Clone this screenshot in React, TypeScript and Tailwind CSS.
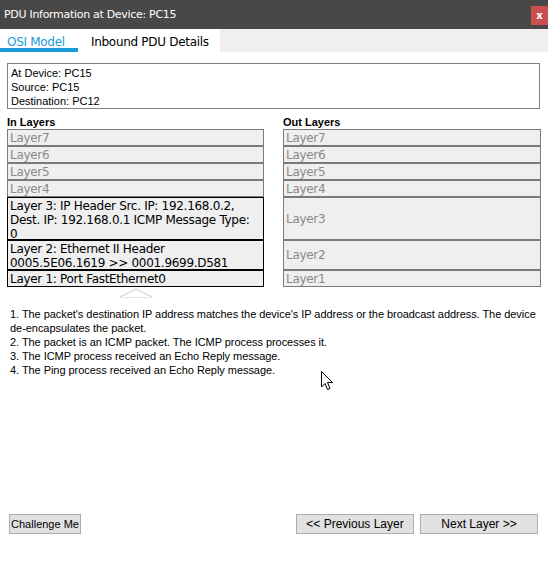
import React from "react";

type LayerRow = {
  label: React.ReactNode;
  h: string;
  active?: boolean;
};

const inLayers: LayerRow[] = [
  { label: "Layer7", h: "h-[17px]" },
  { label: "Layer6", h: "h-[17px]" },
  { label: "Layer5", h: "h-[17px]" },
  { label: "Layer4", h: "h-[17px]" },
  {
    label: (
      <>
        Layer 3: IP Header Src. IP: 192.168.0.2,
        <br />
        Dest. IP: 192.168.0.1 ICMP Message Type:
        <br />0
      </>
    ),
    h: "h-[43px]",
    active: true,
  },
  {
    label: (
      <>
        Layer 2: Ethernet II Header
        <br />
        0005.5E06.1619 &gt;&gt; 0001.9699.D581
      </>
    ),
    h: "h-[30px]",
    active: true,
  },
  { label: "Layer 1: Port FastEthernet0", h: "h-[17px]", active: true },
];

const outLayers: LayerRow[] = [
  { label: "Layer7", h: "h-[17px]" },
  { label: "Layer6", h: "h-[17px]" },
  { label: "Layer5", h: "h-[17px]" },
  { label: "Layer4", h: "h-[17px]" },
  { label: "Layer3", h: "h-[43px]" },
  { label: "Layer2", h: "h-[30px]" },
  { label: "Layer1", h: "h-[17px]" },
];

const steps = [
  "1. The packet's destination IP address matches the device's IP address or the broadcast address. The device",
  "de-encapsulates the packet.",
  "2. The packet is an ICMP packet. The ICMP process processes it.",
  "3. The ICMP process received an Echo Reply message.",
  "4. The Ping process received an Echo Reply message.",
];

function LayerBox({ row, center }: { row: LayerRow; center?: boolean }) {
  return (
    <div
      className={`${row.h} border bg-[#efefef] pl-[2px] text-[12px] leading-[14px] font-['DejaVu_Sans',sans-serif] ${
        row.active
          ? "border-black text-black"
          : "border-[#7a7a7a] text-[#8a8a8a]"
      } ${center ? "flex items-center" : "pt-[1px]"}`}
    >
      <div className="tracking-[-0.3px] whitespace-nowrap">{row.label}</div>
    </div>
  );
}

export default function App() {
  return (
    <div className="relative w-[548px] h-[562px] bg-white flex flex-col overflow-hidden font-['Liberation_Sans',Arial,sans-serif]">
      {/* Title bar */}
      <div className="h-[29px] bg-[#4a4846] flex items-start justify-between shrink-0">
        <span className="pl-[4px] pt-[7px] text-white text-[11px] font-['DejaVu_Sans',sans-serif] tracking-[-0.3px]">
          PDU Information at Device: PC15
        </span>
        <button className="mt-[6px] w-[17px] h-[19px] bg-[#c9504f] text-white text-[10px] font-bold leading-[19px] text-center font-['DejaVu_Sans',sans-serif]">
          x
        </button>
      </div>

      {/* Tabs */}
      <div className="h-[23px] bg-[#efefef] flex shrink-0 font-['DejaVu_Sans',sans-serif] text-[12px] tracking-[-0.3px]">
        <div className="w-[220px] bg-white flex">
          <div className="w-[78px] border-b-[4px] border-[#1a9bd7] text-[#1a9bd7] pl-[7px] pt-[4px]">
            OSI Model
          </div>
          <div className="pl-[13px] pt-[4px] text-black">Inbound PDU Details</div>
        </div>
      </div>

      {/* Body */}
      <div className="flex-1 flex flex-col px-[7px]">
        <div className="mt-[11px] w-[533px] h-[46px] border border-[#828282] pl-[3px] pt-[2px] text-[11px] leading-[14px] text-black">
          <div>At Device: PC15</div>
          <div>Source: PC15</div>
          <div>Destination: PC12</div>
        </div>

        <div className="mt-[7px] flex gap-[19px]">
          <div className="w-[257px] flex flex-col">
            <div className="h-[13px] text-[11px] leading-[13px] font-bold text-black">In Layers</div>
            {inLayers.map((r, i) => (
              <LayerBox key={i} row={r} />
            ))}
            <div className="flex justify-center pt-[1px]">
              <svg width="34" height="10" viewBox="0 0 34 10">
                <polyline points="1,9 17,1 33,9" fill="none" stroke="#d4d4d4" strokeWidth="1.2" />
                <line x1="1" y1="9.5" x2="33" y2="9.5" stroke="#e6e6e6" strokeWidth="1" />
              </svg>
            </div>
          </div>
          <div className="w-[258px] flex flex-col">
            <div className="h-[13px] text-[11px] leading-[13px] font-bold text-black">Out Layers</div>
            {outLayers.map((r, i) => (
              <LayerBox key={i} row={r} center />
            ))}
          </div>
        </div>

        <div className="mt-[9px] pl-[3px] text-[11px] leading-[14px] text-black tracking-[-0.05px]">
          {steps.map((s, i) => (
            <div key={i} className="whitespace-nowrap">
              {s}
            </div>
          ))}
        </div>

        <div className="mt-auto mb-[28px] flex items-center pl-[2px] pr-[3px] text-[12px] whitespace-nowrap">
          <button className="w-[72px] h-[20px] bg-[#e1e1e1] border border-[#adadad] text-black text-[11px] px-0">
            Challenge Me
          </button>
          <div className="ml-auto flex gap-[6px]">
            <button className="w-[118px] h-[20px] bg-[#e1e1e1] border border-[#adadad] text-black">
              &lt;&lt; Previous Layer
            </button>
            <button className="w-[118px] h-[20px] bg-[#e1e1e1] border border-[#adadad] text-black">
              Next Layer &gt;&gt;
            </button>
          </div>
        </div>
      </div>

      {/* mouse pointer */}
      <svg className="absolute left-[321px] top-[371px]" width="13" height="20" viewBox="0 0 13 20">
        <path
          d="M0.5 0.5 L0.5 16 L4 12.5 L6.5 18.5 L9 17.5 L6.5 11.5 L11.5 11.5 Z"
          fill="white"
          stroke="black"
          strokeWidth="1"
          strokeLinejoin="miter"
        />
      </svg>
    </div>
  );
}
